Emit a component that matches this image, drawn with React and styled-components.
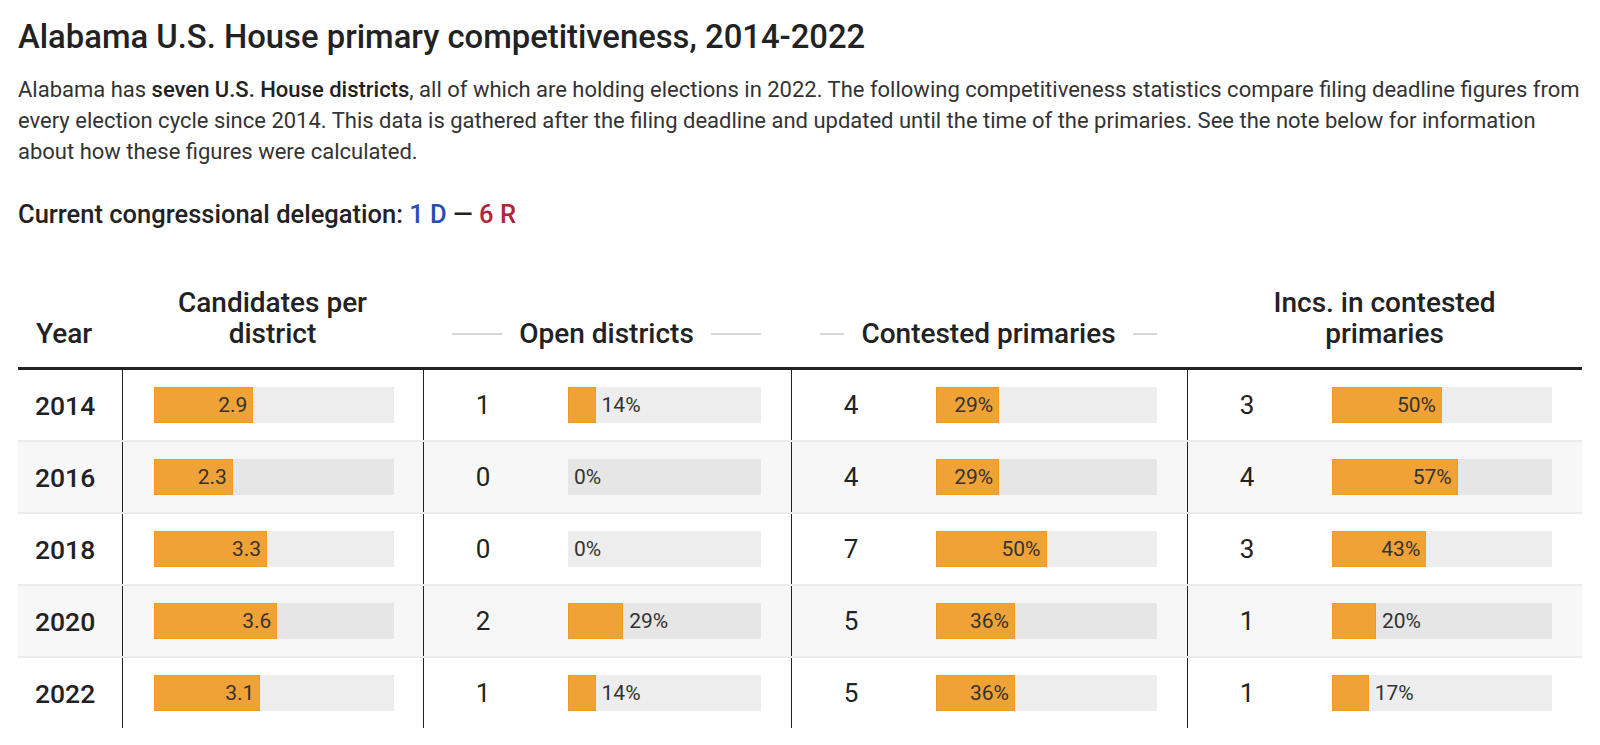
import React from "react"
import styled, { createGlobalStyle } from "styled-components"

const GlobalStyle = createGlobalStyle`
	body {
		margin: 0;
		background: #ffffff;
		font-family: Roboto, "Liberation Sans", sans-serif;
		color: #333333;
	}
`;

const Page = styled.div`
	padding: 17px 18px 0 18px;
	width: 1564px;
`;

const Title = styled.h1`
	margin: 0;
	font-size: 32.8px;
	line-height: 40px;
	font-weight: 500;
	color: #222222;
`;

const Intro = styled.p`
	margin: 17px -8px 0 0;
	font-size: 22px;
	line-height: 31px;
	color: #333333;

	b {
		font-weight: 500;
		color: #222222;
	}
`;

const Delegation = styled.div`
	margin-top: 32px;
	font-size: 25.5px;
	line-height: 30px;
	font-weight: 500;
	color: #222222;
`;

const Party = styled.span`
	color: ${ props => props.party === "D" ? "#2b4db3" : "#b22437" };
`;

const COLUMNS = "104px 301px 368px 396px 395px";

const Table = styled.div`
	margin-top: 58px;
`;

const HeaderRow = styled.div`
	display: grid;
	grid-template-columns: ${ COLUMNS };
	align-items: end;
	padding-bottom: 18px;
	border-bottom: 3px solid #222222;
`;

const HeadCell = styled.div`
	font-size: 28px;
	line-height: 31px;
	font-weight: 500;
	color: #222222;
	text-align: ${ props => props.left ? "left" : "center" };
	padding: ${ props => props.left ? "0 0 0 18px" : "0 30px" };
	display: flex;
	justify-content: ${ props => props.left ? "flex-start" : "center" };
`;

const HeadText = styled.span`
	max-width: ${ props => props.max || "none" };
`;

const GroupHead = styled.div`
	display: flex;
	align-items: center;
	gap: 17px;
	padding: 0 30px 0 29px;
	font-size: 28px;
	line-height: 31px;
	font-weight: 500;
	color: #222222;
	white-space: nowrap;
`;

const Rule = styled.span`
	flex: 1;
	height: 2px;
	background: #d6d6d6;
`;

const Row = styled.div`
	display: grid;
	grid-template-columns: ${ COLUMNS };
	height: 70px;
	background: ${ props => props.shaded ? "#f7f7f7" : "#ffffff" };
	border-top: ${ props => props.first ? "none" : "2px solid #ebebeb" };
`;

const YearCell = styled.div`
	display: flex;
	align-items: center;
	padding-left: 17px;
	font-size: 26.5px;
	font-weight: 500;
	color: #222222;
`;

const BarCell = styled.div`
	display: flex;
	align-items: center;
	padding: 0 29px 0 31px;
	border-left: 1px solid #222222;
`;

const SplitCell = styled.div`
	display: grid;
	grid-template-columns: 118px 1fr;
	column-gap: 26px;
	align-items: center;
	padding-right: 30px;
	border-left: 1px solid #222222;
`;

const Count = styled.div`
	text-align: center;
	font-size: 26px;
	color: #222222;
`;

const Track = styled.div`
	flex: 1;
	display: flex;
	align-items: center;
	height: 36px;
	background: ${ props => props.shaded ? "#e6e6e6" : "#ededed" };
`;

const Fill = styled.div`
	height: 100%;
	display: flex;
	align-items: center;
	justify-content: flex-end;
	background: #f0a236;
	box-shadow: inset 0 0 0 1px #f39c1b;
	box-sizing: border-box;
`;

const BarLabel = styled.span`
	font-size: 21px;
	color: #333333;
	padding: ${ props => props.inside ? "0 6px 0 0" : "0 0 0 6px" };
`;

const Bar = ({ ratio, label, trackWidth, shaded }) => {
	const inside = ratio * trackWidth >= 58
	return (
		<Track shaded={ shaded }>
			<Fill style={ { width: `${ ratio * 100 }%` } }>
				{ inside && <BarLabel inside>{ label }</BarLabel> }
			</Fill>
			{ !inside && <BarLabel>{ label }</BarLabel> }
		</Track>
	)
}

const ROWS = [
	{ year: 2014, cand: 2.9, open: 1, cont: 4, inc: [3, 6] },
	{ year: 2016, cand: 2.3, open: 0, cont: 4, inc: [4, 7] },
	{ year: 2018, cand: 3.3, open: 0, cont: 7, inc: [3, 7] },
	{ year: 2020, cand: 3.6, open: 2, cont: 5, inc: [1, 5] },
	{ year: 2022, cand: 3.1, open: 1, cont: 5, inc: [1, 6] },
];

const pct = ratio => `${ Math.round(ratio * 100) }%`

export default function App() {
	return (
		<Page>
			<GlobalStyle />
			<Title>Alabama U.S. House primary competitiveness, 2014-2022</Title>
			<Intro>
				Alabama has <b>seven U.S. House districts</b>, all of which are holding elections in 2022. The following competitiveness statistics compare filing deadline figures from every election cycle since 2014. This data is gathered after the filing deadline and updated until the time of the primaries. See the note below for information about how these figures were calculated.
			</Intro>
			<Delegation>
				Current congressional delegation: <Party party="D">1 D</Party> — <Party party="R">6 R</Party>
			</Delegation>

			<Table>
				<HeaderRow>
					<HeadCell left>Year</HeadCell>
					<HeadCell><HeadText max="225px">Candidates per district</HeadText></HeadCell>
					<GroupHead><Rule />Open districts<Rule /></GroupHead>
					<GroupHead><Rule />Contested primaries<Rule /></GroupHead>
					<HeadCell><HeadText max="270px">Incs. in contested primaries</HeadText></HeadCell>
				</HeaderRow>

				{ ROWS.map((row, i) => {
					const shaded = i % 2 === 1
					const incRatio = row.inc[0] / row.inc[1]
					return (
						<Row key={ row.year } shaded={ shaded } first={ i === 0 }>
							<YearCell>{ row.year }</YearCell>
							<BarCell>
								<Bar ratio={ row.cand / 7 } label={ row.cand.toFixed(1) } trackWidth={ 241 } shaded={ shaded } />
							</BarCell>
							<SplitCell>
								<Count>{ row.open }</Count>
								<Bar ratio={ row.open / 7 } label={ pct(row.open / 7) } trackWidth={ 193 } shaded={ shaded } />
							</SplitCell>
							<SplitCell>
								<Count>{ row.cont }</Count>
								<Bar ratio={ row.cont / 14 } label={ pct(row.cont / 14) } trackWidth={ 220 } shaded={ shaded } />
							</SplitCell>
							<SplitCell>
								<Count>{ row.inc[0] }</Count>
								<Bar ratio={ incRatio } label={ pct(incRatio) } trackWidth={ 220 } shaded={ shaded } />
							</SplitCell>
						</Row>
					)
				}) }
			</Table>
		</Page>
	)
}
